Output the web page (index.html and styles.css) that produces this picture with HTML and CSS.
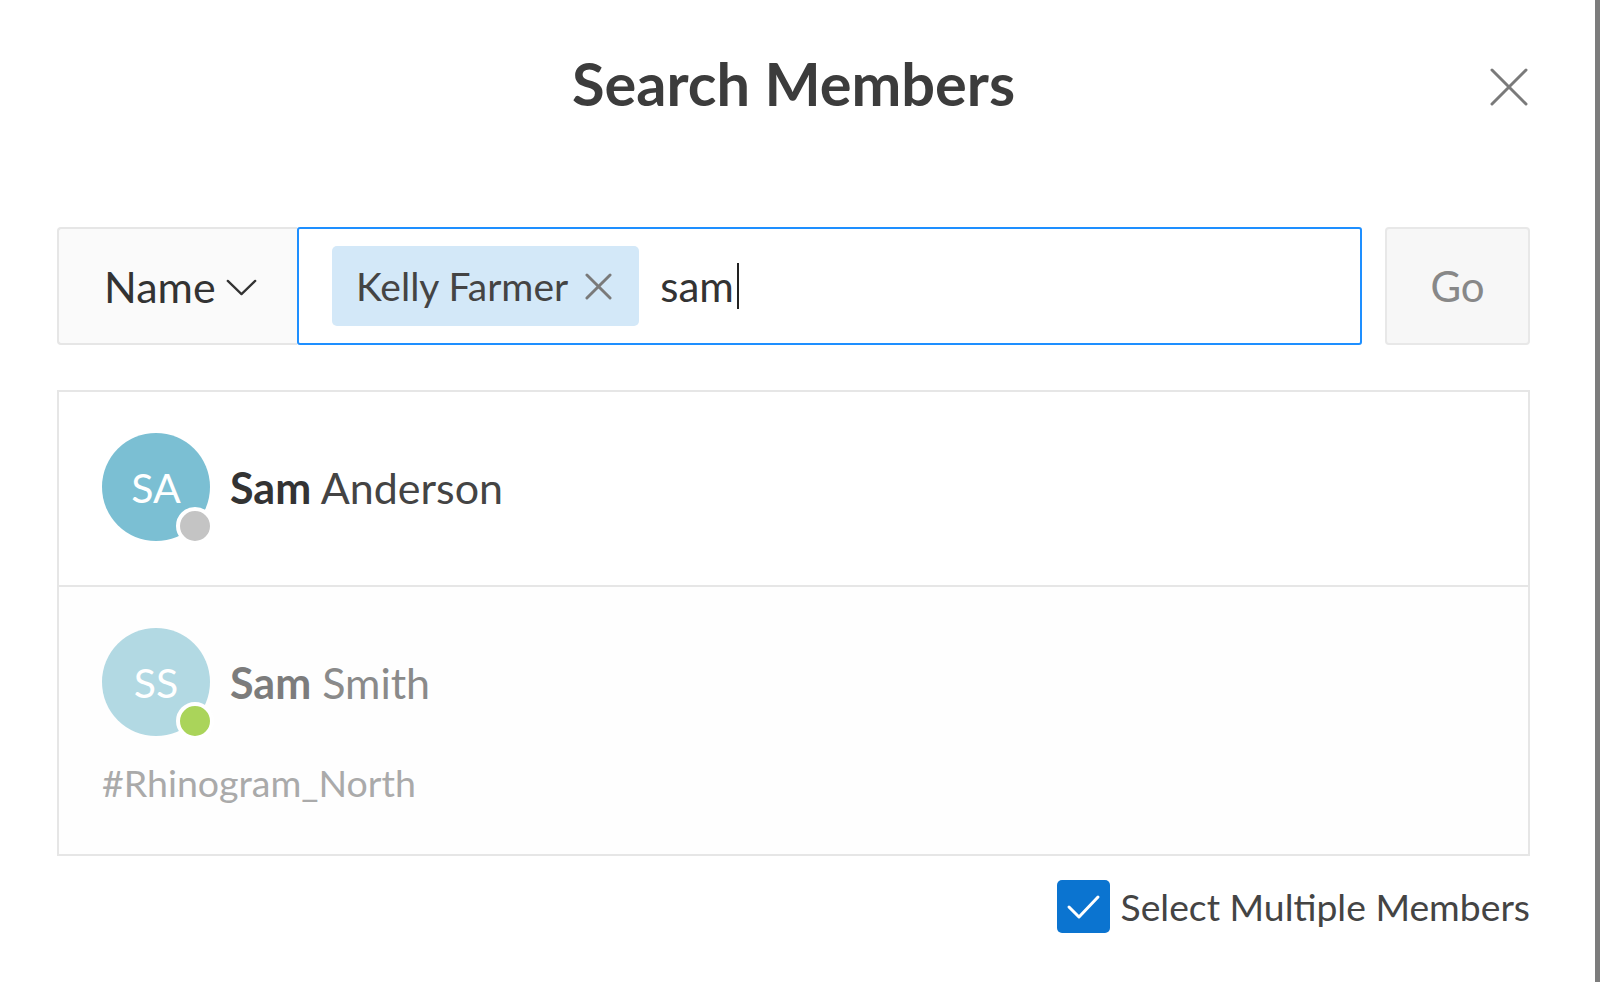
FILE: index.html
```html
<!DOCTYPE html>
<html lang="en">
<head>
<meta charset="utf-8">
<title>Search Members</title>
<link rel="stylesheet" href="styles.css">
</head>
<body>
<div class="page">
  <div class="modal">
    <header class="head">
      <div class="head-spacer"></div>
      <h1 class="title">Search Members</h1>
      <button class="close" type="button" aria-label="Close">
        <svg viewBox="0 0 38 38" width="38" height="38"><path d="M2 2 L36 36 M36 2 L2 36" stroke="#7a7a7a" stroke-width="3" stroke-linecap="round" fill="none"/></svg>
      </button>
    </header>

    <div class="search">
      <div class="field-select">
        <span>Name</span>
        <svg class="chev" viewBox="0 0 32 18" width="31" height="17"><path d="M1.5 2 L16 16 L30.5 2" stroke="#333" stroke-width="2.4" fill="none" stroke-linecap="round" stroke-linejoin="round"/></svg>
      </div>
      <div class="field-input">
        <span class="chip">
          <span class="chip-text">Kelly Farmer</span>
          <svg class="chip-x" viewBox="0 0 28 28" width="27" height="27"><path d="M2 2 L26 26 M26 2 L2 26" stroke="#7a7a7a" stroke-width="3" stroke-linecap="round" fill="none"/></svg>
        </span>
        <span class="typed">sam</span><span class="caret"></span>
      </div>
      <button class="go" type="button">Go</button>
    </div>

    <div class="results">
      <div class="row">
        <div class="member">
          <div class="avatar avatar-sa">SA<span class="dot dot-away"></span></div>
          <div class="name"><b>Sam</b> Anderson</div>
        </div>
      </div>
      <div class="row row-muted">
        <div class="member">
          <div class="avatar avatar-ss">SS<span class="dot dot-online"></span></div>
          <div class="name name-muted"><b>Sam</b> Smith</div>
        </div>
        <div class="sub">#Rhinogram_North</div>
      </div>
    </div>

    <label class="multi">
      <span class="check">
        <svg viewBox="0 0 53 53" width="53" height="53"><path d="M12 27 L22 37 L41 17" stroke="#fff" stroke-width="3" fill="none" stroke-linecap="round" stroke-linejoin="round"/></svg>
      </span>
      <span class="multi-text">Select Multiple Members</span>
    </label>
  </div>
  <div class="edge"></div>
</div>
</body>
</html>
```

FILE: styles.css
```css
* { box-sizing: border-box; }

html, body {
  margin: 0;
  padding: 0;
  background: #fff;
}

body {
  font-family: Lato, "Open Sans", "Liberation Sans", sans-serif;
  color: #444;
}

.page {
  display: flex;
  width: 1600px;
  height: 982px;
  overflow: hidden;
}

.modal {
  flex: 1;
  padding: 0 65px 0 57px;
  display: flex;
  flex-direction: column;
}

.edge {
  width: 5px;
  background: #7c7c7c;
}

/* header */
.head {
  display: grid;
  grid-template-columns: 1fr auto 1fr;
  margin-top: 47px;
}

.title {
  margin: 0;
  font-size: 59.5px;
  line-height: 72px;
  font-weight: 700;
  color: #3c3c3c;
  text-align: center;
}

.close {
  justify-self: end;
  align-self: start;
  margin-top: 21px;
  margin-right: 2px;
  padding: 0;
  border: 0;
  background: none;
  width: 38px;
  height: 38px;
  display: block;
}
.close svg { display: block; }

/* search bar */
.search {
  display: flex;
  height: 118px;
  margin-top: 108px;
}

.field-select {
  width: 240px;
  display: flex;
  align-items: center;
  gap: 10px;
  padding-left: 45px;
  background: #fafafa;
  border: 2px solid #e6e6e6;
  border-right: 0;
  border-radius: 4px 0 0 4px;
  font-size: 43px;
  color: #333;
}
.chev { margin-top: 2px; }

.field-input {
  flex: 1;
  display: flex;
  align-items: center;
  padding-left: 33px;
  border: 2px solid #1e8fff;
  border-radius: 3px;
  font-size: 42px;
  color: #333;
}

.chip {
  display: flex;
  align-items: center;
  gap: 17px;
  height: 80px;
  padding: 0 27px 0 24px;
  background: #d3e8f8;
  border-radius: 5px;
  color: #444;
  font-size: 39px;
}
.chip-x { display: block; }

.typed { margin-left: 21px; }

.caret {
  width: 2px;
  height: 46px;
  margin-left: 3px;
  background: #222;
}

.go {
  width: 145px;
  margin-left: 23px;
  background: #f7f7f7;
  border: 2px solid #e8e8e8;
  border-radius: 4px;
  font-family: inherit;
  font-size: 42px;
  color: #888;
  padding: 0;
}

/* results */
.results {
  margin-top: 45px;
  border: 2px solid #e6e6e6;
}

.row {
  padding: 41px 43px 44px;
}

.row-muted {
  border-top: 2px solid #e6e6e6;
  background: #fefefe;
  padding-bottom: 49px;
}

.member {
  display: flex;
  align-items: center;
  gap: 20px;
}

.avatar {
  position: relative;
  width: 108px;
  height: 108px;
  border-radius: 50%;
  display: flex;
  align-items: center;
  justify-content: center;
  color: #fff;
  font-size: 41px;
  flex-shrink: 0;
}
.avatar-sa { background: #7bbfd3; }
.avatar-ss { background: #b2d9e3; }

.dot {
  position: absolute;
  right: -4px;
  bottom: -4px;
  width: 38px;
  height: 38px;
  border-radius: 50%;
  border: 4px solid #fff;
}
.dot-away { background: #c4c4c4; }
.dot-online { background: #aad45a; }

.name {
  font-size: 43px;
  color: #444;
}
.name b { color: #333; font-weight: 700; }

.name-muted { color: #8a8a8a; }
.name-muted b { color: #7c7c7c; }

.sub {
  margin-top: 25px;
  font-size: 37.5px;
  line-height: 44px;
  color: #aaa;
}

/* footer checkbox */
.multi {
  align-self: flex-end;
  display: flex;
  align-items: center;
  gap: 11px;
  margin-top: 24px;
}

.check {
  width: 53px;
  height: 53px;
  border-radius: 5px;
  background: #0b74d0;
  display: block;
}
.check svg { display: block; }

.multi-text {
  font-size: 37.3px;
  color: #444;
}
```
